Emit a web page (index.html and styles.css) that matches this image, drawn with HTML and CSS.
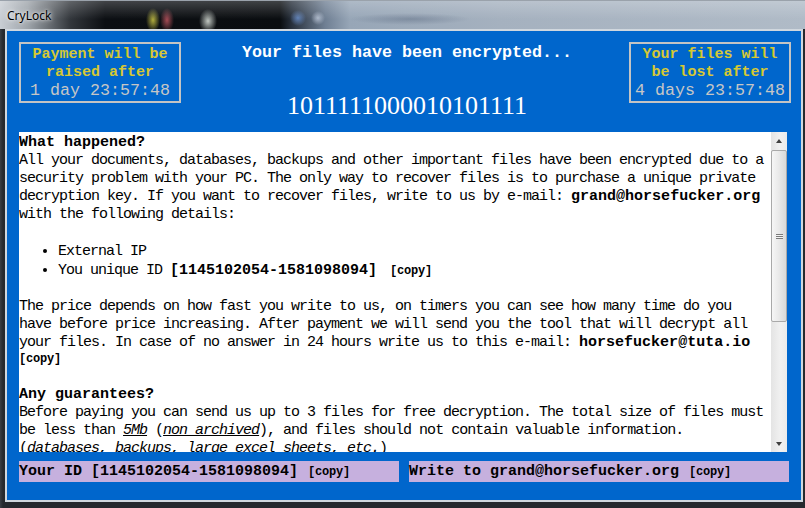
FILE: index.html
```html
<!DOCTYPE html>
<html>
<head>
<meta charset="utf-8">
<title>CryLock</title>
<link rel="stylesheet" href="styles.css">
</head>
<body>
<div class="window">
  <div class="titlebar"><span class="title">CryLock</span></div>
  <div class="frame">
    <div class="client">
      <div class="header">
        <div class="timer">
          <div class="t-label">Payment will be</div>
          <div class="t-label">raised after</div>
          <div class="t-time">1 day 23:57:48</div>
        </div>
        <div class="center">
          <div class="headline">Your files have been encrypted...</div>
          <div class="binary">1011111000010101111</div>
        </div>
        <div class="timer">
          <div class="t-label">Your files will</div>
          <div class="t-label">be lost after</div>
          <div class="t-time">4 days 23:57:48</div>
        </div>
      </div>
      <div class="textarea">
        <div class="content">
          <div class="heading">What happened?</div>
          <p class="para">All your documents, databases, backups and other important files have been encrypted due to a<br>security problem with your PC. The only way to recover files is to purchase a unique private<br>decryption key. If you want to recover files, write to us by e-mail: <b class="strong">grand@horsefucker.org</b><br>with the following details:</p>
          <ul class="details">
            <li>External IP</li>
            <li>You unique ID <b class="strong">[1145102054-1581098094]</b> <b class="copy copy-list">[copy]</b></li>
          </ul>
          <p class="para">The price depends on how fast you write to us, on timers you can see how many time do you<br>have before price increasing. After payment we will send you the tool that will decrypt all<br>your files. In case of no answer in 24 hours write us to this e-mail: <b class="strong">horsefucker@tuta.io</b></p>
          <div class="copy-line"><b class="copy">[copy]</b></div>
          <div class="heading heading-2">Any guarantees?</div>
          <p class="para">Before paying you can send us up to 3 files for free decryption. The total size of files must<br>be less than <i class="em"><u>5Mb</u></i> (<i class="em"><u>non archived</u></i>), and files should not contain valuable information.<br>(<i class="em">databases, backups, large excel sheets, etc.</i>)</p>
        </div>
        <div class="scrollbar">
          <div class="sb-btn"><span class="arrow-up"></span></div>
          <div class="sb-thumb"><span class="grip"></span></div>
          <div class="sb-track"></div>
          <div class="sb-btn sb-btn-down"><span class="arrow-down"></span></div>
        </div>
      </div>
      <div class="bars">
        <div class="bar"><b class="strong">Your ID [1145102054-1581098094]</b> <b class="copy copy-bar">[copy]</b></div>
        <div class="bar"><b class="strong">Write to grand@horsefucker.org</b> <b class="copy copy-bar">[copy]</b></div>
      </div>
    </div>
  </div>
</div>
</body>
</html>
```
FILE: styles.css
```css
html, body {
  margin: 0;
  padding: 0;
}
body {
  width: 805px;
  height: 508px;
  overflow: hidden;
  background: #15181c;
}
.window {
  width: 805px;
  height: 508px;
  display: flex;
  flex-direction: column;
  box-sizing: border-box;
  background: #1e2227;
}
.titlebar {
  height: 29px;
  flex: none;
  box-sizing: border-box;
  border-top: 1px solid #9aa2ab;
  display: flex;
  align-items: center;
  padding-left: 7px;
  background:
    linear-gradient(rgba(255,255,255,0.22), rgba(255,255,255,0) 65%),
    radial-gradient(ellipse 7px 12px at 153px 19px, rgba(205,200,70,0.85), rgba(205,200,70,0)),
    radial-gradient(ellipse 7px 12px at 167px 19px, rgba(190,85,95,0.85), rgba(190,85,95,0)),
    radial-gradient(ellipse 9px 12px at 208px 20px, rgba(225,232,225,0.85), rgba(225,232,225,0)),
    radial-gradient(ellipse 8px 8px at 298px 17px, rgba(110,150,215,0.75), rgba(110,150,215,0)),
    radial-gradient(ellipse 7px 7px at 318px 17px, rgba(205,215,232,0.7), rgba(205,215,232,0)),
    radial-gradient(ellipse 60px 6px at 410px 18px, rgba(70,85,110,0.35), rgba(70,85,110,0)),
    linear-gradient(to right, #c9ced4 0, #9ea4aa 28px, #33373c 70px, #0c0f13 105px, #0a0d10 280px, #28313d 292px, #6f7f93 325px, #97a6b7 350px, #a5b1bf 500px, #b0bbc7 805px);
}
.title {
  font-family: "Noto Sans", "Open Sans", sans-serif;
  font-size: 12px;
  color: #000;
  text-shadow: 0 0 6px rgba(255,255,255,0.95), 0 0 3px rgba(255,255,255,0.9);
}
.frame {
  flex: 1;
  display: flex;
  padding: 0 2px 6px 5px;
  background: linear-gradient(to right, #3a3f45 0, #25292e 3px, #25292e 100%);
}
.client {
  flex: 1;
  background: #0066cc;
  border: 2px solid #d0d7de;
  padding: 0 0 0 12px;
  display: flex;
  flex-direction: column;
}
.header {
  margin-top: 11px;
  width: 772px;
  height: 90px;
  display: grid;
  grid-template-columns: 162px 1fr 162px;
  align-items: start;
}
.timer {
  height: 61px;
  box-sizing: border-box;
  border: 2px solid #c4c4c4;
  padding-top: 2px;
  text-align: center;
  font-family: "Liberation Mono", monospace;
  line-height: 18px;
  white-space: nowrap;
}
.t-label {
  color: #d6c834;
  font-size: 15px;
  font-weight: bold;
}
.t-time {
  color: #c6c6c6;
  font-size: 16.66px;
}
.center {
  text-align: center;
  padding-left: 4px;
  padding-top: 2px;
}
.headline {
  font-family: "Liberation Mono", monospace;
  font-weight: bold;
  font-size: 16.66px;
  line-height: 18px;
  color: #fff;
  white-space: nowrap;
}
.binary {
  margin-top: 29px;
  font-family: "Liberation Serif", serif;
  font-size: 26px;
  line-height: 30px;
  color: #fff;
}
.textarea {
  width: 768px;
  height: 320px;
  background: #fff;
  display: flex;
}
.content {
  width: 752px;
  height: 320px;
  box-sizing: border-box;
  padding-top: 2px;
  overflow: hidden;
  font-family: "Liberation Mono", monospace;
  font-size: 15px;
  line-height: 18px;
  letter-spacing: -1px;
  color: #000;
  white-space: nowrap;
}
.heading {
  font-weight: bold;
  letter-spacing: 0;
}
.heading-2 {
  margin-top: 20px;
}
.para {
  margin: 0;
}
.strong {
  font-weight: bold;
  letter-spacing: 0;
}
.em {
  font-style: italic;
}
.details {
  margin: 18px 0 18px 0;
  padding-left: 39px;
  list-style: disc;
}
.details li::marker {
  font-size: 16px;
}
.copy {
  font-weight: bold;
  font-size: 12px;
  letter-spacing: -0.2px;
}
.copy-list {
  margin-left: 5px;
}
.copy-line {
  line-height: 14px;
  letter-spacing: 0;
}
.scrollbar {
  width: 16px;
  display: flex;
  flex-direction: column;
  background: linear-gradient(to right, #e4e4e4, #f1f1f1 60%, #ebebeb);
}
.sb-btn {
  height: 17px;
  flex: none;
  display: flex;
  align-items: center;
  justify-content: center;
}
.sb-btn-down {
  height: 16px;
}
.arrow-up {
  width: 0;
  height: 0;
  border-left: 3.5px solid transparent;
  border-right: 3.5px solid transparent;
  border-bottom: 4px solid #404040;
}
.arrow-down {
  width: 0;
  height: 0;
  border-left: 3.5px solid transparent;
  border-right: 3.5px solid transparent;
  border-top: 4px solid #404040;
}
.sb-thumb {
  margin: 1px 0 0 0;
  height: 172px;
  flex: none;
  box-sizing: border-box;
  border: 1px solid #a9a9a9;
  border-radius: 2px;
  background: linear-gradient(to right, #f6f6f6, #e9e9e9 50%, #d9d9d9);
  display: flex;
  align-items: center;
  justify-content: center;
}
.grip {
  width: 7px;
  height: 5px;
  background: repeating-linear-gradient(#7a7a7a 0 1px, #f4f4f4 1px 2px);
}
.sb-track {
  flex: 1;
}
.bars {
  margin-top: 9px;
  display: flex;
  gap: 10px;
}
.bar {
  width: 380px;
  height: 21px;
  background: #c6b0de;
  font-family: "Liberation Mono", monospace;
  font-size: 15px;
  line-height: 22px;
  color: #000;
  white-space: nowrap;
}
.copy-bar {
  margin-left: 1px;
}
```
